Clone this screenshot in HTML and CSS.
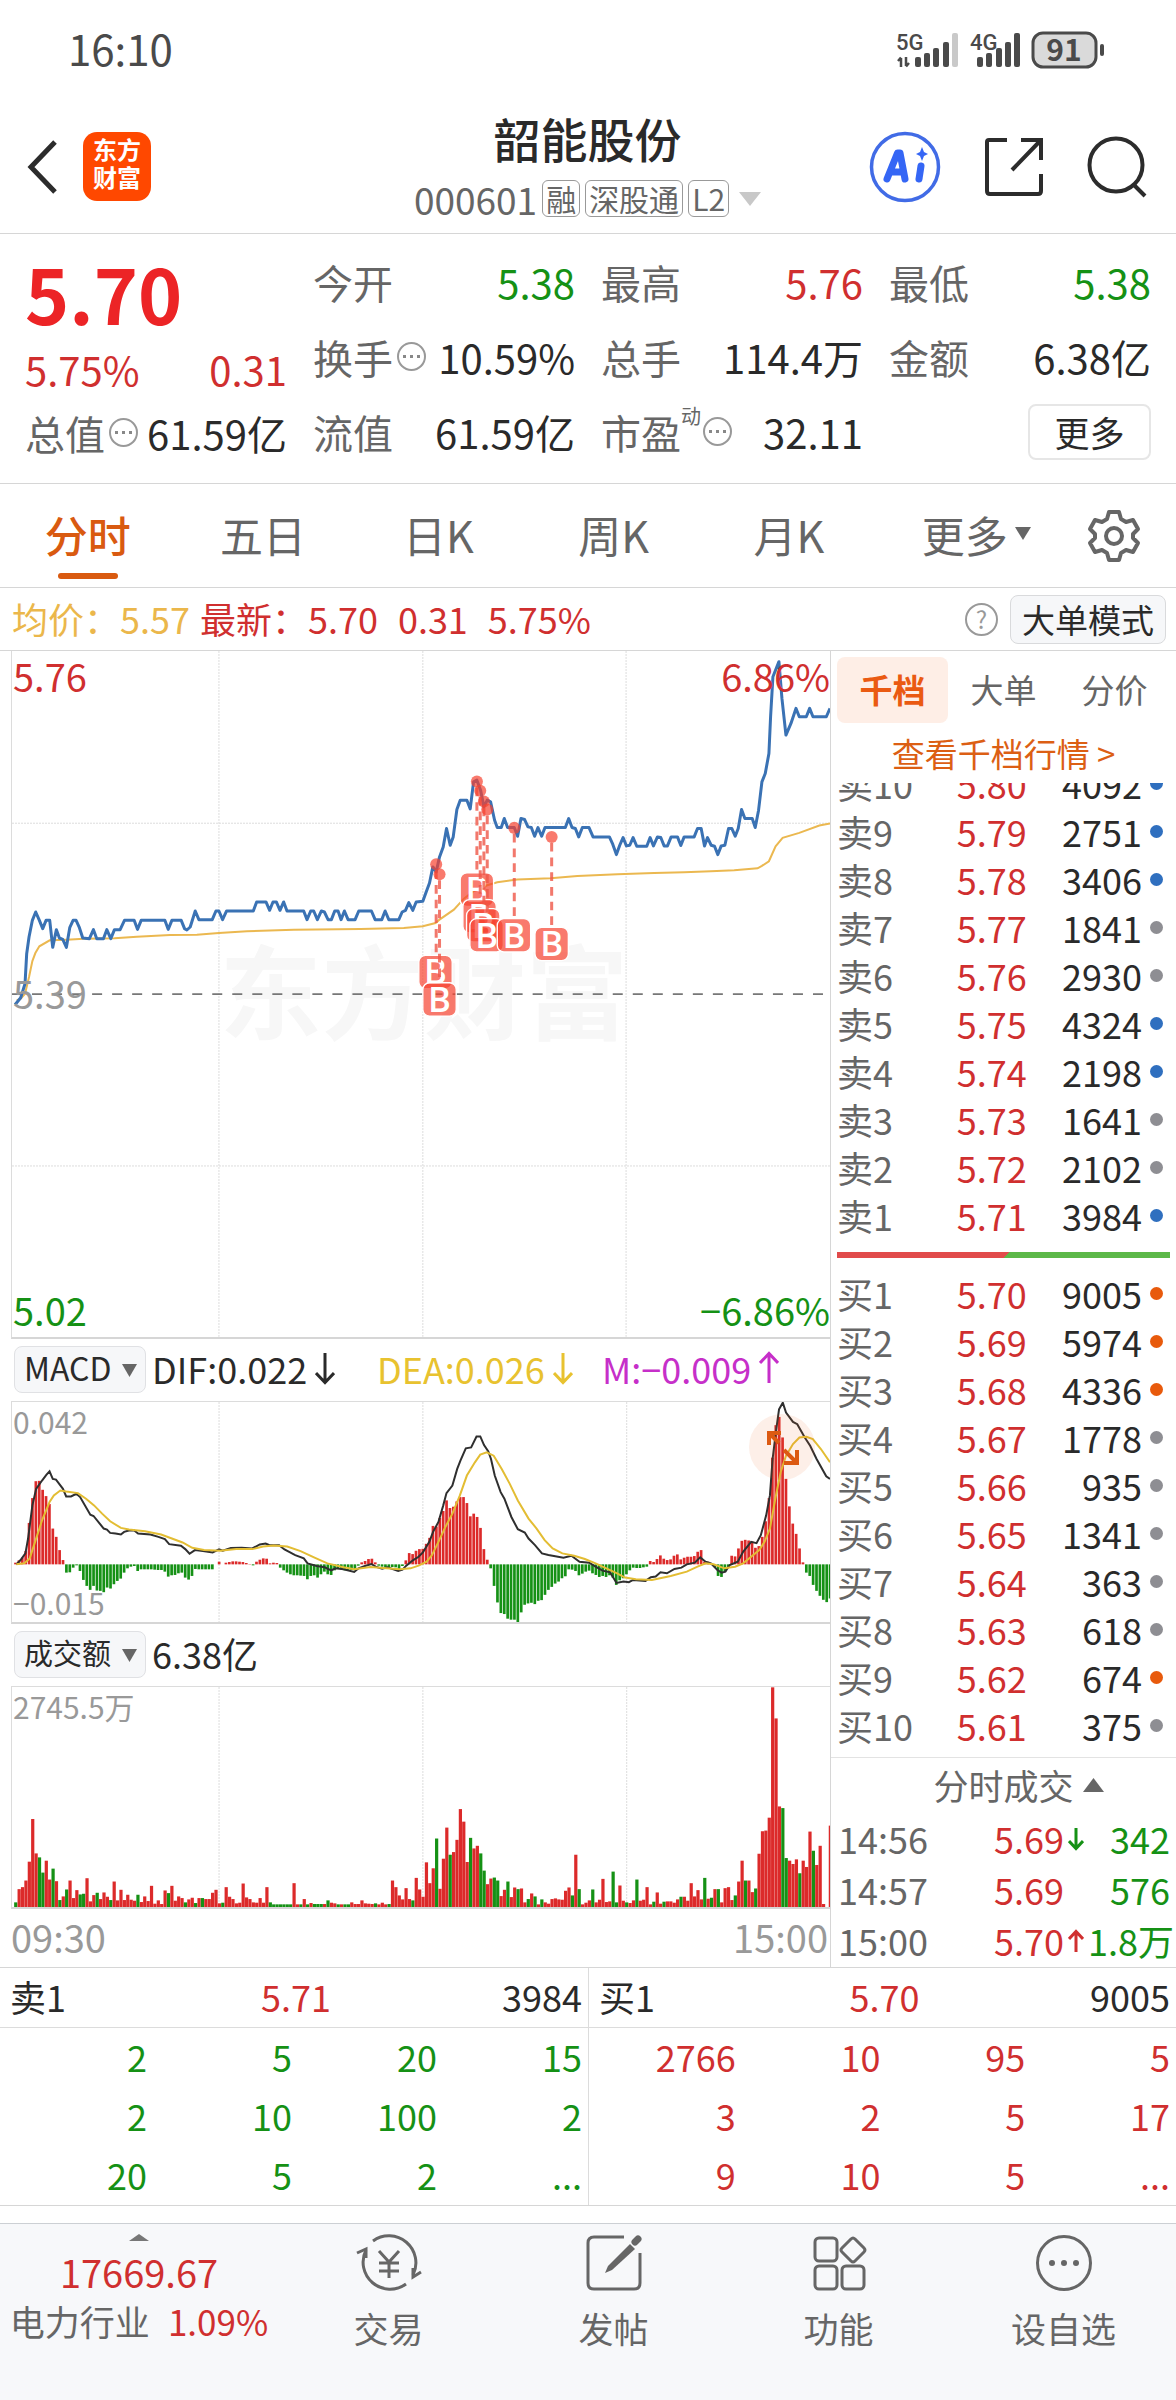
FILE: index.html
```html
<!DOCTYPE html>
<html lang="zh-CN">
<head>
  <meta charset="UTF-8">
  <meta name="viewport" content="width=device-width, initial-scale=1">
  <title>韶能股份 000601</title>
  <link rel="stylesheet" href="styles.css">
</head>
<body>

<!-- status bar -->
<div class="status-bar">
  <span class="clock">16:10</span>
  <svg class="status-icons" viewBox="0 0 212 44" width="212" height="44">
    <g fill="#4a4a4a">
      <text x="0" y="22" class="net">5G</text>
      <path d="M5 39V30M2 33L5 29.500M10 29V38M13 35L10 38.500" stroke="#4a4a4a" stroke-width="2.500" fill="none"/>
      <rect x="19" y="29" width="6" height="10" rx="2"/>
      <rect x="28" y="25" width="6" height="14" rx="2"/>
      <rect x="37" y="20" width="6" height="19" rx="2"/>
      <rect x="47" y="14" width="6" height="25" rx="2"/>
      <rect x="56" y="5" width="6" height="34" rx="2" fill="#c9c9c9"/>
      <text x="74" y="22" class="net">4G</text>
      <rect x="81" y="29" width="6" height="10" rx="2"/>
      <rect x="90" y="25" width="6" height="14" rx="2"/>
      <rect x="100" y="20" width="6" height="19" rx="2"/>
      <rect x="109" y="14" width="6" height="25" rx="2"/>
      <rect x="118" y="5" width="6" height="34" rx="2"/>
      <rect x="137" y="5" width="63" height="34" rx="10" fill="#dadada" stroke="#4a4a4a" stroke-width="3"/>
      <rect x="204" y="16" width="4" height="12" rx="2"/>
      <text x="168" y="33" text-anchor="middle" class="battery">91</text>
    </g>
  </svg>
</div>

<header class="header">
  <div class="header-left">
    <button class="icon-btn" aria-label="返回">
      <svg width="32" height="56" viewBox="0 0 32 56"><path d="M29 3L5 28L29 53" fill="none" stroke="#2c2c2c" stroke-width="5"/></svg>
    </button>
    <a class="logo" href="#">东方<br>财富</a>
  </div>
  <div class="stock">
    <h1>韶能股份</h1>
    <div class="stock-code">
      <span>000601</span>
      <span class="badge">融</span>
      <span class="badge">深股通</span>
      <span class="badge">L2</span>
      <svg width="22" height="14" viewBox="0 0 22 14"><path d="M0 0H22L11 14Z" fill="#c8c8c8"/></svg>
    </div>
  </div>
  <div class="header-right">
    <button class="icon-btn" aria-label="AI">
      <svg width="72" height="72" viewBox="0 0 72 72">
        <circle cx="36" cy="36" r="33.500" fill="none" stroke="#416be6" stroke-width="3.500"/>
        <g fill="none" stroke="#3566f5" stroke-width="7" stroke-linejoin="round" stroke-linecap="round">
          <path d="M18 48L28.500 22H31L36 48M22 41H34"/>
          <path d="M52 35L50 48"/>
        </g>
        <path d="M53 16L55 21L59 23L55 25L53 30L51 25L47 23L51 21Z" fill="#3566f5"/>
      </svg>
    </button>
    <button class="icon-btn" aria-label="分享">
      <svg width="60" height="60" viewBox="0 0 60 60">
        <path d="M23 3H5Q3 3 3 5V54Q3 57 6 57H54Q57 57 57 54V37M37 3H57V23M57 3L28 33" fill="none" stroke="#2c2c2c" stroke-width="4"/>
      </svg>
    </button>
    <button class="icon-btn" aria-label="搜索">
      <svg width="62" height="62" viewBox="0 0 62 62">
        <circle cx="29" cy="29" r="26.500" fill="none" stroke="#2c2c2c" stroke-width="4"/>
        <path d="M46 48L58 60" stroke="#2c2c2c" stroke-width="4"/>
      </svg>
    </button>
  </div>
</header>

<!-- quote -->
<section class="quote">
  <div class="quote-main">
    <div class="price up">5.70</div>
    <div class="change up"><span>5.75%</span><span>0.31</span></div>
    <div class="cell"><span class="label">总值<i class="more-dot"></i></span><span>61.59亿</span></div>
  </div>
  <div class="quote-col">
    <div class="cell"><span class="label">今开</span><span class="down">5.38</span></div>
    <div class="cell"><span class="label">换手<i class="more-dot"></i></span><span>10.59%</span></div>
    <div class="cell"><span class="label">流值</span><span>61.59亿</span></div>
  </div>
  <div class="quote-col">
    <div class="cell"><span class="label">最高</span><span class="up">5.76</span></div>
    <div class="cell"><span class="label">总手</span><span>114.4万</span></div>
    <div class="cell"><span class="label">市盈<sup>动</sup><i class="more-dot"></i></span><span>32.11</span></div>
  </div>
  <div class="quote-col">
    <div class="cell"><span class="label">最低</span><span class="down">5.38</span></div>
    <div class="cell"><span class="label">金额</span><span>6.38亿</span></div>
    <div class="cell cell-end"><button class="more-btn">更多</button></div>
  </div>
</section>

<nav class="tabs">
  <button class="tab active">分时</button>
  <button class="tab">五日</button>
  <button class="tab">日K</button>
  <button class="tab">周K</button>
  <button class="tab">月K</button>
  <button class="tab tab-more">更多<svg width="16" height="13" viewBox="0 0 16 13"><path d="M0 0H16L8 13Z" fill="#666"/></svg></button>
  <button class="settings" aria-label="设置">
    <svg width="54" height="54" viewBox="0 0 54 54" fill="none" stroke="#666" stroke-width="4" stroke-linejoin="round">
      <path d="M22 3H32L34 10L39 13L46 11L51 20L46 25V29L51 34L46 43L39 41L34 44L32 51H22L20 44L15 41L8 43L3 34L8 29V25L3 20L8 11L15 13L20 10Z"/>
      <circle cx="27" cy="27" r="8"/>
    </svg>
  </button>
</nav>

<div class="info-bar">
  <span class="avg">均价：5.57</span>
  <span class="latest">最新：5.70</span>
  <span class="up">0.31</span>
  <span class="up">5.75%</span>
  <span class="help">?</span>
  <button class="mode-btn">大单模式</button>
</div>

<main class="board">
  <div class="charts">

    <div class="plot price-plot">
      <svg class="price-svg" viewBox="36 33 2451 2055">
        <text x="1270" y="1175" text-anchor="middle" class="watermark">东方财富</text>
        <g class="grid">
          <path d="M656 33V2088M1267 33V2088M1876 33V2088M36 549H2487M36 1576H2487"/>
        </g>
        <path d="M36 1061H2487" class="mid-line"/>
        <polyline class="avg-line" points="50,1080 62,1075 75,1060 87,1010 97,962 106,938 118,918 149,900 200,898 250,895 343,894 410,889 510,884 590,883 656,878 740,873 880,868 1080,866 1210,863 1267,858 1305,848 1317,838 1360,808 1390,775 1420,752 1460,735 1490,726 1550,718 1650,714 1730,707 1850,702 1960,698 2050,696 2130,693 2200,690 2270,684 2283,677 2304,663 2324,618 2345,593 2395,578 2455,556 2487,550"/>
        <polyline class="price-line" points="45,1093 62,1072 75,1030 80,940 87,890 97,840 107,815 118,840 128,865 138,840 149,840 158,921 169,868 178,893 188,897 199,921 209,862 219,840 228,840 238,862 248,893 268,895 280,868 290,895 310,895 320,868 332,895 343,868 360,868 373,840 402,840 412,867 423,840 494,840 504,867 515,840 543,840 553,865 560,869 570,860 585,812 596,838 636,838 647,812 656,812 667,838 679,812 759,812 769,785 797,785 808,810 818,785 828,785 839,810 850,785 860,812 910,812 920,838 931,812 940,812 951,838 963,812 972,815 983,838 993,838 1003,812 1013,812 1022,838 1032,812 1043,838 1064,838 1075,812 1113,812 1124,838 1144,838 1154,812 1165,838 1195,838 1205,815 1215,810 1225,787 1237,810 1247,785 1267,783 1277,755 1287,728 1297,680 1307,695 1317,650 1328,620 1338,565 1349,615 1358,590 1369,508 1379,480 1399,480 1409,506 1419,425 1429,420 1440,450 1450,500 1460,480 1470,485 1482,540 1490,562 1502,562 1511,535 1521,562 1541,562 1551,588 1561,535 1572,538 1582,560 1592,562 1602,588 1612,562 1623,588 1633,562 1694,562 1704,535 1714,562 1724,565 1734,590 1745,562 1765,562 1777,590 1826,590 1836,612 1847,643 1857,615 1867,592 1877,617 1887,615 1897,592 1908,618 1938,618 1948,592 1958,617 1970,590 1980,592 1990,617 2000,617 2011,590 2030,590 2040,616 2050,590 2080,590 2090,565 2101,565 2111,617 2120,592 2131,615 2141,618 2151,643 2161,617 2172,615 2183,565 2193,565 2203,588 2212,565 2222,508 2232,535 2254,535 2263,562 2273,510 2283,425 2293,400 2304,340 2309,230 2316,110 2324,90 2334,65 2343,175 2355,285 2370,250 2385,205 2395,230 2416,230 2426,205 2436,230 2476,230 2487,205"/>
        <g id="buyMarks"></g>
      </svg>
      <span class="axis top-left up">5.76</span>
      <span class="axis top-right up">6.86%</span>
      <span class="axis mid-left">5.39</span>
      <span class="axis bottom-left down">5.02</span>
      <span class="axis bottom-right down">−6.86%</span>
    </div>

    <div class="legend">
      <span class="picker">
        <select aria-label="指标"><option>MACD</option></select>
        <svg width="15" height="13" viewBox="0 0 15 13"><path d="M0 0H15L7.500 13Z" fill="#666"/></svg>
      </span>
      <span class="legend-item">DIF:0.022<svg width="20" height="34" viewBox="0 0 20 34"><path d="M10 2V31M1 22L10 31.500L19 22"/></svg></span>
      <span class="legend-item dea">DEA:0.026<svg width="20" height="34" viewBox="0 0 20 34"><path d="M10 2V31M1 22L10 31.500L19 22"/></svg></span>
      <span class="legend-item macd">M:−0.009<svg width="20" height="34" viewBox="0 0 20 34"><path d="M10 32V3M1 12L10 2.500L19 12"/></svg></span>
    </div>

    <div class="plot sub-plot">
      <svg viewBox="22 58 1525 664" preserveAspectRatio="none">
        <g class="grid"><path d="M408 58V722M788 58V722M1168 58V722"/></g>
        <g id="macdBars"></g>
        <polyline class="dif-line" points="30,548 38,535 47,515 52,470 60,370 67,320 78,295 86,278 92,267 98,290 104,292 117,320 123,343 132,343 142,335 149,345 168,398 174,402 193,440 199,443 205,453 215,455 225,458 231,450 240,446 250,446 257,455 280,458 295,465 307,472 315,487 337,492 345,502 353,516 363,505 378,508 396,512 408,503 415,507 430,499 450,498 470,500 484,488 495,485 502,490 520,490 530,503 550,520 566,530 573,545 590,553 605,557 617,566 625,560 640,563 660,571 668,560 680,553 692,547 700,555 712,561 722,557 742,568 750,564 757,552 770,535 780,525 788,512 800,480 807,450 817,420 826,370 832,333 843,310 852,260 858,235 868,198 878,195 888,162 895,162 902,188 910,207 915,230 922,280 933,330 940,350 953,405 965,442 978,452 985,470 997,490 1010,515 1022,520 1050,528 1065,522 1080,540 1098,543 1110,555 1123,567 1137,572 1149,604 1162,600 1172,602 1180,595 1203,598 1213,587 1222,585 1231,572 1243,575 1257,562 1270,558 1280,548 1295,543 1305,527 1315,540 1325,545 1337,565 1345,573 1352,570 1360,550 1375,540 1385,510 1400,480 1410,484 1418,460 1428,400 1435,340 1440,230 1446,150 1452,80 1459,60 1465,90 1478,118 1486,125 1500,165 1510,190 1522,230 1540,282 1547,290"/>
        <polyline class="dea-line" points="30,548 45,545 55,530 65,480 78,415 92,360 100,340 112,325 123,328 145,333 160,350 175,370 190,395 205,418 225,438 240,443 270,448 300,458 320,470 340,482 358,498 380,505 410,507 440,502 470,502 490,494 510,491 535,494 560,508 585,527 610,545 640,557 660,563 690,556 720,560 745,563 765,560 780,552 795,540 805,520 817,480 830,435 843,395 857,340 870,280 885,240 895,217 907,210 920,220 935,260 950,305 965,355 985,410 1000,440 1015,475 1030,500 1048,515 1070,522 1090,532 1110,545 1130,560 1150,575 1165,588 1185,593 1215,595 1250,583 1280,570 1300,555 1315,545 1330,548 1350,560 1370,555 1385,545 1400,525 1415,505 1425,480 1435,440 1445,350 1455,270 1465,220 1478,185 1490,165 1503,163 1515,170 1530,200 1547,240"/>
      </svg>
      <span class="axis small top-left">0.042</span>
      <span class="axis small bottom-left">−0.015</span>
      <button class="expand" aria-label="展开">
        <svg width="66" height="66" viewBox="0 0 66 66" fill="none" stroke="#dc5a12" stroke-width="4">
          <path d="M20 31V19H32M20 19L30 29M35 36L48 49M48 36V49H35"/>
        </svg>
      </button>
    </div>

    <div class="legend">
      <span class="picker">
        <select class="cn" aria-label="指标"><option>成交额</option></select>
        <svg width="15" height="13" viewBox="0 0 15 13"><path d="M0 0H15L7.500 13Z" fill="#666"/></svg>
      </span>
      <span class="legend-item">6.38亿</span>
    </div>

    <div class="plot sub-plot">
      <svg viewBox="22 193 1525 665" preserveAspectRatio="none">
        <g class="grid"><path d="M408 193V858M788 193V858M1168 193V858"/></g>
        <g id="volumeBars"></g>
      </svg>
      <span class="axis small top-left">2745.5万</span>
    </div>

    <div class="time-axis"><span>09:30</span><span>15:00</span></div>
  </div>

  <aside class="side">
    <div class="side-tabs">
      <button class="side-tab active">千档</button>
      <button class="side-tab">大单</button>
      <button class="side-tab">分价</button>
    </div>
    <a class="depth-link" href="#">查看千档行情 &gt;</a>

    <div class="asks">
      <table class="orders">
        <tr><td>卖10</td><td>5.80</td><td>4092</td><td><i class="dot blue"></i></td></tr>
        <tr><td>卖9</td><td>5.79</td><td>2751</td><td><i class="dot blue"></i></td></tr>
        <tr><td>卖8</td><td>5.78</td><td>3406</td><td><i class="dot blue"></i></td></tr>
        <tr><td>卖7</td><td>5.77</td><td>1841</td><td><i class="dot"></i></td></tr>
        <tr><td>卖6</td><td>5.76</td><td>2930</td><td><i class="dot"></i></td></tr>
        <tr><td>卖5</td><td>5.75</td><td>4324</td><td><i class="dot blue"></i></td></tr>
        <tr><td>卖4</td><td>5.74</td><td>2198</td><td><i class="dot blue"></i></td></tr>
        <tr><td>卖3</td><td>5.73</td><td>1641</td><td><i class="dot"></i></td></tr>
        <tr><td>卖2</td><td>5.72</td><td>2102</td><td><i class="dot"></i></td></tr>
        <tr><td>卖1</td><td>5.71</td><td>3984</td><td><i class="dot blue"></i></td></tr>
      </table>
    </div>
    <div class="ratio"></div>
    <table class="orders">
      <tr><td>买1</td><td>5.70</td><td>9005</td><td><i class="dot orange"></i></td></tr>
      <tr><td>买2</td><td>5.69</td><td>5974</td><td><i class="dot orange"></i></td></tr>
      <tr><td>买3</td><td>5.68</td><td>4336</td><td><i class="dot orange"></i></td></tr>
      <tr><td>买4</td><td>5.67</td><td>1778</td><td><i class="dot"></i></td></tr>
      <tr><td>买5</td><td>5.66</td><td>935</td><td><i class="dot"></i></td></tr>
      <tr><td>买6</td><td>5.65</td><td>1341</td><td><i class="dot"></i></td></tr>
      <tr><td>买7</td><td>5.64</td><td>363</td><td><i class="dot"></i></td></tr>
      <tr><td>买8</td><td>5.63</td><td>618</td><td><i class="dot"></i></td></tr>
      <tr><td>买9</td><td>5.62</td><td>674</td><td><i class="dot orange"></i></td></tr>
      <tr><td>买10</td><td>5.61</td><td>375</td><td><i class="dot"></i></td></tr>
    </table>

    <button class="trades-title">分时成交<svg width="21" height="14" viewBox="0 0 21 14"><path d="M0 14H21L10.500 0Z" fill="#666"/></svg></button>
    <table class="trades">
      <tr><td>14:56</td><td>5.69</td><td><svg class="down" width="16" height="24" viewBox="0 0 16 24"><path d="M8 1V21M1 14L8 21.500L15 14"/></svg></td><td>342</td></tr>
      <tr><td>14:57</td><td>5.69</td><td></td><td>576</td></tr>
      <tr><td>15:00</td><td>5.70</td><td><svg class="up" width="16" height="24" viewBox="0 0 16 24"><path d="M8 23V3M1 10L8 2.500L15 10"/></svg></td><td>1.8万</td></tr>
    </table>
  </aside>
</main>

<!-- order queue -->
<section class="queue">
  <div class="queue-side">
    <div class="queue-head"><span>卖1</span><span class="up">5.71</span><span>3984</span></div>
    <table class="down">
      <tr><td>2</td><td>5</td><td>20</td><td>15</td></tr>
      <tr><td>2</td><td>10</td><td>100</td><td>2</td></tr>
      <tr><td>20</td><td>5</td><td>2</td><td>...</td></tr>
    </table>
  </div>
  <div class="queue-side">
    <div class="queue-head"><span>买1</span><span class="up">5.70</span><span>9005</span></div>
    <table class="up">
      <tr><td>2766</td><td>10</td><td>95</td><td>5</td></tr>
      <tr><td>3</td><td>2</td><td>5</td><td>17</td></tr>
      <tr><td>9</td><td>10</td><td>5</td><td>...</td></tr>
    </table>
  </div>
</section>

<footer class="bottom-bar">
  <a class="index" href="#">
    <svg width="20" height="7" viewBox="0 0 20 7"><path d="M0 7H20L10 0Z" fill="#777"/></svg>
    <span class="index-value up">17669.67</span>
    <span class="index-name">电力行业<b class="up">1.09%</b></span>
  </a>
  <a class="action" href="#">
    <svg width="66" height="58" viewBox="0 0 66 58" fill="none" stroke="#666" stroke-width="3">
      <path d="M17 7A27 27 0 0 1 57 41M50 50A27 27 0 0 1 10 16"/>
      <path d="M1 19L10 15V24M65 38L57 43V34"/>
      <path d="M23 17L33 28L43 17M33 28V44M23 29H43M23 37H43"/>
    </svg>
    <span>交易</span>
  </a>
  <a class="action" href="#">
    <svg width="58" height="58" viewBox="0 0 58 58" fill="none" stroke="#666" stroke-width="3">
      <path d="M39 3H9Q3 3 3 9V49Q3 55 9 55H49Q55 55 55 49V19"/>
      <path d="M50 8L53 5" stroke-width="7" stroke-linecap="round"/>
      <path d="M45 10L50 15L27 36L20 39L23 32Z" fill="#666" stroke="none"/>
    </svg>
    <span>发帖</span>
  </a>
  <a class="action" href="#">
    <svg width="56" height="58" viewBox="0 0 56 58" fill="none" stroke="#666" stroke-width="3" stroke-linejoin="round">
      <rect x="4" y="4" width="22" height="23" rx="4"/>
      <rect x="4" y="32" width="22" height="23" rx="4"/>
      <rect x="31" y="32" width="22" height="23" rx="4"/>
      <path d="M40 5Q42 3 44 5L53 14Q55 16 53 18L44 27Q42 29 40 27L31 18Q29 16 31 14Z"/>
    </svg>
    <span>功能</span>
  </a>
  <a class="action" href="#">
    <svg width="58" height="58" viewBox="0 0 58 58">
      <circle cx="29" cy="29" r="26.500" fill="none" stroke="#666" stroke-width="3"/>
      <g fill="#666"><circle cx="17" cy="29" r="3"/><circle cx="29" cy="29" r="3"/><circle cx="41" cy="29" r="3"/></g>
    </svg>
    <span>设自选</span>
  </a>
</footer>

<script src="charts.js"></script>
</body>
</html>
```
FILE: styles.css
```css
* {
  box-sizing: border-box;
}

body {
  margin: 0;
  min-height: 100vh;
  display: flex;
  flex-direction: column;
  background: #fff;
  color: #2a2a2a;
  font-family: "Noto Sans CJK SC", "Noto Sans", sans-serif;
  font-size: 36px;
}

button, select {
  font-family: inherit;
  color: inherit;
  border: none;
  background: none;
  padding: 0;
  cursor: pointer;
}

a {
  color: inherit;
  text-decoration: none;
}

svg {
  display: block;
  flex-shrink: 0;
}

table {
  width: 100%;
  border-collapse: collapse;
  table-layout: fixed;
}

td {
  padding: 0;
}

.up {
  color: #d02f2f;
}

.down {
  color: #159115;
}

/* status bar */
.status-bar {
  height: 100px;
  padding: 0 68px;
  display: flex;
  justify-content: space-between;
  align-items: center;
}

.clock {
  font-size: 42px;
  line-height: 60px;
  padding-bottom: 4px;
  color: #4a4a4a;
}

.net {
  font-size: 22px;
  font-weight: 500;
  font-family: Roboto, sans-serif;
}

.battery {
  font-size: 30px;
  font-weight: 700;
}

/* header */
.header {
  height: 134px;
  padding: 0 27px 0 26px;
  display: grid;
  grid-template-columns: 1fr auto 1fr;
  align-items: center;
  border-bottom: 1px solid #d6d6d6;
}

.header-left {
  display: flex;
  align-items: center;
  gap: 25px;
}

.logo {
  width: 68px;
  height: 69px;
  padding-top: 3px;
  border-radius: 14px;
  background: #ff4800;
  color: #fff;
  font-size: 24px;
  line-height: 28px;
  font-weight: 700;
  text-align: center;
}

.stock h1 {
  margin: 0;
  padding-bottom: 4px;
  font-size: 47px;
  line-height: 60px;
  font-weight: 500;
  text-align: center;
}

.stock-code {
  height: 54px;
  display: flex;
  align-items: center;
  gap: 5px;
  font-size: 37px;
  color: #666;
}

.stock-code svg {
  margin-left: 5px;
}

.badge {
  height: 37px;
  padding: 0 3px;
  border: 1px solid #999;
  border-radius: 6px;
  font-size: 30px;
  line-height: 34px;
}

.header-right {
  display: flex;
  align-items: center;
  justify-content: flex-end;
  gap: 43px;
}

/* quote */
.quote {
  padding: 10px 25px 14px 25px;
  display: grid;
  grid-template-columns: repeat(4, 1fr);
  gap: 26px;
  font-size: 40px;
  border-bottom: 1px solid #d6d6d6;
}

.price {
  height: 98px;
  font-size: 75px;
  line-height: 98px;
  font-weight: 700;
  color: #ec2426;
}

.change {
  height: 54px;
  line-height: 54px;
  display: flex;
  justify-content: space-between;
}

.cell {
  height: 75px;
  display: flex;
  align-items: center;
  justify-content: space-between;
  white-space: nowrap;
}

.quote-main .cell {
  height: 73px;
}

.cell-end {
  justify-content: flex-end;
}

.label {
  display: flex;
  align-items: center;
  color: #666;
}

.label sup {
  align-self: flex-start;
  font-size: 20px;
  line-height: 26px;
}

.more-dot {
  width: 29px;
  height: 29px;
  margin-left: 4px;
  border: 2px solid #999;
  border-radius: 50%;
  background: radial-gradient(circle, #888 2px, transparent 2px) center / 7px 7px repeat-x content-box;
  padding: 9px 2px;
}

.label sup + .more-dot {
  margin-left: 2px;
}

.more-btn {
  width: 123px;
  height: 56px;
  border: 2px solid #e6e6e6;
  border-radius: 8px;
  font-size: 35px;
  line-height: 48px;
}

/* period tabs */
.tabs {
  height: 104px;
  display: flex;
  border-bottom: 1px solid #d6d6d6;
}

.tab {
  flex: 1;
  position: relative;
  display: flex;
  align-items: center;
  justify-content: center;
  gap: 7px;
  font-size: 43px;
  color: #666;
  padding-bottom: 4px;
}

.tab-more {
  padding: 0 12px 4px;
}

.tab.active {
  color: #d95a10;
  font-weight: 500;
}

.tab.active::after {
  content: "";
  position: absolute;
  bottom: 8px;
  left: 50%;
  width: 60px;
  height: 6px;
  margin-left: -30px;
  border-radius: 3px;
  background: #d95a10;
}

.settings {
  width: 100px;
  padding-right: 24px;
  display: flex;
  align-items: center;
  justify-content: center;
}

/* info bar */
.info-bar {
  height: 63px;
  padding: 0 10px 0 12px;
  display: flex;
  align-items: center;
  border-bottom: 1px solid #d6d6d6;
  line-height: 54px;
  white-space: nowrap;
}

.info-bar span {
  padding-bottom: 3px;
}

.info-bar .avg {
  color: #ebb74b;
  margin-right: 10px;
}

.info-bar .latest {
  color: #d02f2f;
  margin-right: 20px;
}

.info-bar .up {
  margin-right: 20px;
}

.info-bar .help {
  width: 33px;
  height: 33px;
  padding: 0;
  margin-left: auto;
  margin-right: 12px;
  border: 2px solid #999;
  border-radius: 50%;
  font-size: 24px;
  line-height: 28px;
  text-align: center;
  color: #999;
}

.mode-btn {
  height: 49px;
  padding: 0 11px;
  border: 1px solid #d9dadc;
  border-radius: 8px;
  background: #f6f7f9;
  font-size: 33px;
  line-height: 44px;
}

/* board */
.board {
  display: grid;
  grid-template-columns: 1fr 346px;
  border-bottom: 1px solid #d6d6d6;
}

.charts {
  min-width: 0;
  padding-left: 11px;
}

.plot {
  position: relative;
  border-left: 1px solid #dcdcdc;
  border-bottom: 2px solid #d6d6d6;
}

.plot > svg {
  width: 100%;
}

.sub-plot {
  border-top: 1px solid #dcdcdc;
}

.sub-plot > svg {
  height: 220px;
}

.grid path {
  fill: none;
  stroke: #dcdcdc;
  stroke-width: 1;
  stroke-dasharray: 2 1;
  vector-effect: non-scaling-stroke;
}

.mid-line {
  stroke: #777;
  stroke-width: 5;
  stroke-dasharray: 30 30;
}

.watermark {
  font-size: 306px;
  font-weight: 700;
  fill: #f7f7f7;
}

.price-line {
  fill: none;
  stroke: #3a72b4;
  stroke-width: 9;
  stroke-linejoin: round;
}

.avg-line {
  fill: none;
  stroke: #ebb850;
  stroke-width: 6;
}

.dif-line, .dea-line {
  fill: none;
  stroke: #2f2f2f;
  stroke-width: 2;
  vector-effect: non-scaling-stroke;
}

.dea-line {
  stroke: #e3bd33;
}

.bar-up {
  fill: #dc2a2a;
}

.bar-down {
  fill: #159115;
}

.mark-stem {
  stroke: #ef5748;
  stroke-width: 9;
  stroke-dasharray: 26 18;
  opacity: 0.8;
}

.mark-dot, .mark-box {
  fill: #f7412f;
  fill-opacity: 0.7;
}

.mark-box {
  stroke: #fff;
  stroke-width: 4;
}

.mark-text {
  font-family: "Open Sans", sans-serif;
  font-size: 104px;
  font-weight: 600;
  fill: #fff;
}

.axis {
  position: absolute;
  font-size: 38px;
  line-height: 44px;
}

.axis.small {
  font-size: 30px;
  line-height: 36px;
  color: #999;
}

.top-left {
  top: 3px;
  left: 1px;
}

.top-right {
  top: 3px;
  right: 0;
}

.mid-left {
  top: 320px;
  left: 1px;
  color: #999;
}

.bottom-left {
  bottom: 5px;
  left: 1px;
}

.bottom-right {
  bottom: 5px;
  right: 0;
}

.axis.small.top-left {
  top: 1px;
}

.axis.small.bottom-left {
  bottom: 2px;
}

.expand {
  position: absolute;
  top: 12px;
  right: 15px;
  border-radius: 50%;
  background: rgba(238, 100, 30, 0.1);
}

.legend {
  height: 62px;
  padding-left: 3px;
  display: flex;
  align-items: center;
}

.picker {
  position: relative;
  width: 132px;
  height: 47px;
  margin-right: 6px;
  border: 1px solid #e0e1e4;
  border-radius: 8px;
  background: #f6f7f9;
}

.picker select {
  appearance: none;
  display: block;
  width: 100%;
  height: 45px;
  padding: 0 0 4px 9px;
  font-size: 32px;
  line-height: 41px;
}

.picker select.cn {
  font-size: 29px;
}

.picker svg {
  position: absolute;
  right: 8px;
  top: 17px;
  pointer-events: none;
}

.legend-item {
  min-width: 225px;
  display: flex;
  align-items: center;
  gap: 8px;
  padding-bottom: 4px;
  font-size: 36px;
  line-height: 54px;
  white-space: nowrap;
}

.legend-item svg, .trades svg {
  fill: none;
  stroke: currentColor;
  stroke-width: 3;
}

.dea {
  color: #e8c22f;
}

.macd {
  color: #c62fc9;
}

.time-axis {
  display: flex;
  justify-content: space-between;
  padding-right: 2px;
  font-size: 38px;
  line-height: 55px;
  color: #999;
}

/* right side */
.side {
  padding: 6px 6px 1px 6px;
  border-left: 1px solid #d6d6d6;
}

.side-tabs {
  display: flex;
}

.side-tab {
  flex: 1;
  height: 66px;
  border-radius: 8px;
  font-size: 33px;
  color: #666;
  padding-bottom: 2px;
}

.side-tab.active {
  background: #feeee6;
  color: #ea5a12;
  font-weight: 700;
}

.depth-link {
  display: block;
  font-size: 33px;
  line-height: 60px;
  text-align: center;
  color: #dc5f14;
}

.asks {
  height: 456px;
  overflow: hidden;
  display: flex;
  align-items: flex-end;
}

.orders td {
  height: 48px;
  line-height: 48px;
  color: #2a2a2a;
}

.orders td:nth-child(1) {
  width: 34%;
  color: #666;
}

.orders td:nth-child(2) {
  width: 25%;
  color: #d02f2f;
  text-align: center;
}

.orders td:nth-child(3) {
  text-align: right;
}

.orders td:nth-child(4) {
  width: 28px;
}

.dot {
  display: block;
  width: 13px;
  height: 13px;
  margin: 0 auto;
  border-radius: 50%;
  background: #8e8e93;
}

.dot.blue {
  background: #2f6fbf;
}

.dot.orange {
  background: #e85a0c;
}

.ratio {
  height: 6px;
  margin: 13px 0 11px;
  background: linear-gradient(135deg, #e14b4b 51%, #5cb848 51%);
}

.trades-title {
  width: 345px;
  height: 56px;
  margin: 8px -6px 0;
  display: flex;
  align-items: center;
  justify-content: center;
  gap: 9px;
  padding: 0 0 2px 30px;
  border-top: 1px solid #e3e3e3;
  font-size: 35px;
  color: #666;
}

.trades td {
  height: 51px;
  line-height: 51px;
  white-space: nowrap;
}

.trades td:nth-child(1) {
  padding-left: 1px;
  color: #666;
}

.trades td:nth-child(2) {
  width: 70px;
  color: #d02f2f;
  text-align: right;
}

.trades td:nth-child(3) {
  width: 24px;
  padding-left: 4px;
}

.trades td:nth-child(4) {
  width: 82px;
  color: #159115;
  text-align: right;
}

/* order queue */
.queue {
  display: grid;
  grid-template-columns: 1fr 1fr;
  border-bottom: 1px solid #d6d6d6;
}

.queue-side + .queue-side {
  border-left: 1px solid #dcdcdc;
}

.queue-head {
  height: 60px;
  padding: 0 6px 0 10px;
  display: grid;
  grid-template-columns: 1fr 1fr 1fr;
  line-height: 56px;
  border-bottom: 1px solid #dcdcdc;
}

.queue-head span:nth-child(2) {
  text-align: center;
}

.queue-head span:nth-child(3) {
  text-align: right;
}

.queue td {
  height: 59px;
  padding: 0 6px 2px 0;
  line-height: 57px;
  text-align: right;
}

.queue td:first-child {
  width: 26%;
}

/* bottom bar */
.bottom-bar {
  flex: 1;
  margin-top: 17px;
  padding-top: 10px;
  display: flex;
  border-top: 1px solid #ccd0d4;
  background: #f7f8fa;
  color: #666;
}

.index {
  width: 276px;
  padding-left: 2px;
  display: flex;
  flex-direction: column;
  align-items: center;
}

.index-value {
  margin-top: 6px;
  font-size: 38px;
  line-height: 50px;
}

.index-name {
  font-size: 35px;
  line-height: 48px;
  white-space: nowrap;
}

.index-name b {
  margin-left: 18px;
  font-weight: 400;
}

.action {
  flex: 1;
  display: flex;
  flex-direction: column;
  align-items: center;
  font-size: 35px;
  line-height: 52px;
}

.action span {
  margin-top: 10px;
}
```
FILE: charts.js
```js
const SVG_NS = 'http://www.w3.org/2000/svg';

// macd histogram, one value per minute
const macd = [
  5, 12, 20, 40, 125, 200, 251, 252, 225, 206, 182, 108, 83, 43, 13, -25, -24, -10, -3, -20,
  -47, -65, -77, -65, -79, -80, -84, -70, -73, -60, -50, -43, -25, -12, -7, -5, -20, -15, -15, -15,
  -15, -16, -17, -17, -22, -37, -33, -32, -27, -25, -40, -46, -35, -14, -15, -15, -15, -15, -15, 0,
  8, 0, 5, 7, 9, 9, 8, 7, 4, 1, -3, 8, 14, 18, 17, 3, 5, 4, -10, -18,
  -25, -30, -33, -33, -34, -35, -45, -35, -33, -40, -30, -22, -30, -32, -18, -13, -15, -18, -17, -17,
  -18, -4, 6, 10, 16, 17, 6, -4, -7, -9, -8, -8, -9, -14, -5, 12, 34, 31, 41, 46,
  47, 62, 80, 116, 114, 140, 161, 193, 170, 174, 190, 203, 203, 185, 145, 153, 143, 110, 46, 14,
  -12, -65, -115, -147, -150, -164, -167, -167, -174, -145, -122, -118, -116, -120, -110, -108, -92, -77, -68, -58,
  -52, -42, -36, -15, -16, -20, -33, -28, -22, -19, -27, -32, -38, -35, -38, -33, -40, -62, -48, -42,
  -30, -18, -10, -11, -11, -9, -7, 10, 7, 16, 27, 17, 13, 15, 26, 30, 15, 20, 23, 23,
  25, 38, 43, 8, 8, 3, -8, -35, -38, -22, -10, 26, 24, 48, 71, 74, 72, 69, 50, 55,
  83, 130, 200, 322, 420, 445, 383, 258, 175, 123, 92, 48, 6, -25, -35, -62, -80, -95, -107, -114, -103
];

// turnover per minute, negative = price fell in that minute
const volume = [
  -14, 54, 60, 80, 137, 266, 162, -150, -104, 140, 83, -116, 78, -21, 32, -53, 80, 27, 51, -38,
  -40, 87, 17, 36, -43, 24, 44, 31, -21, 77, 20, 52, 21, 37, 22, 19, -37, 15, 32, 18,
  64, 10, 20, 9, 50, -42, 64, 19, 32, 27, -14, 23, 28, -12, 27, -27, 24, 24, 43, 52,
  11, -13, 60, 31, 24, 11, 13, 71, 29, 24, 14, 13, 27, 13, 60, -14, -8, -8, -8, -8,
  -8, -8, 72, 8, -8, 24, -8, 12, -9, -9, -9, 9, -20, 13, 11, -8, 8, -8, -8, 14,
  9, 9, 20, 11, 10, 9, -11, 8, 13, 8, -9, 80, 60, 35, 23, 57, 24, -20, 88, 53,
  31, 135, 72, 117, -207, 55, 146, 240, -158, 166, 203, 296, 258, 136, -209, 177, 185, -162, -110, 69,
  86, -89, -80, 33, 52, -77, 30, 59, -54, 56, 14, -24, 41, -32, 8, -23, 14, 10, 24, 26,
  23, 22, 49, 59, -35, 158, -54, 8, 13, 20, -53, 14, 22, 85, 15, 17, -107, -14, 65, 19,
  -14, 12, 20, -83, 19, 22, 60, 8, -16, 44, 10, -16, 17, 17, 13, 23, -31, 31, 19, 72,
  32, 51, 23, -88, 25, -28, 54, -54, 14, 57, 60, 21, -35, 77, 140, -80, 80, 45, -56, 161,
  229, 231, 270, 664, 570, 304, -299, -148, 140, 130, 144, -102, 140, 121, 228, -170, 127, 185, 9, 0, 246
];

// big buy orders: point on the price line and badge centre
const buys = [
  [1307, 672, 1305, 995],
  [1317, 702, 1317, 1077],
  [1429, 424, 1429, 748],
  [1439, 452, 1437, 828],
  [1450, 484, 1448, 855],
  [1460, 508, 1458, 885],
  [1541, 563, 1540, 885],
  [1653, 590, 1653, 911]
];

function add(parent, tag, attrs) {
  const el = document.createElementNS(SVG_NS, tag);
  for (const key in attrs) {
    el.setAttribute(key, attrs[key]);
  }
  parent.appendChild(el);
  return el;
}

function drawBars(id, values, base, width, signed) {
  const group = document.getElementById(id);
  const step = 1525 / 241;

  values.forEach((v, i) => {
    const h = Math.abs(v);
    const below = signed && v < 0;
    add(group, 'rect', {
      x: 26 + i * step,
      y: below ? base : base - h,
      width: width,
      height: h,
      class: v < 0 ? 'bar-down' : 'bar-up'
    });
  });
}

drawBars('macdBars', macd, 548, 5, true);
drawBars('volumeBars', volume, 858, 6, false);

const marks = document.getElementById('buyMarks');
buys.forEach(([x, y, bx, by]) => {
  add(marks, 'line', { x1: x, y1: y + 18, x2: x, y2: by - 50, class: 'mark-stem' });
  add(marks, 'circle', { cx: x, cy: y, r: 18, class: 'mark-dot' });
  add(marks, 'rect', { x: bx - 50, y: by - 50, width: 100, height: 100, rx: 20, class: 'mark-box' });
  add(marks, 'text', { x: bx, y: by + 37, 'text-anchor': 'middle', class: 'mark-text' }).textContent = 'B';
});
```
